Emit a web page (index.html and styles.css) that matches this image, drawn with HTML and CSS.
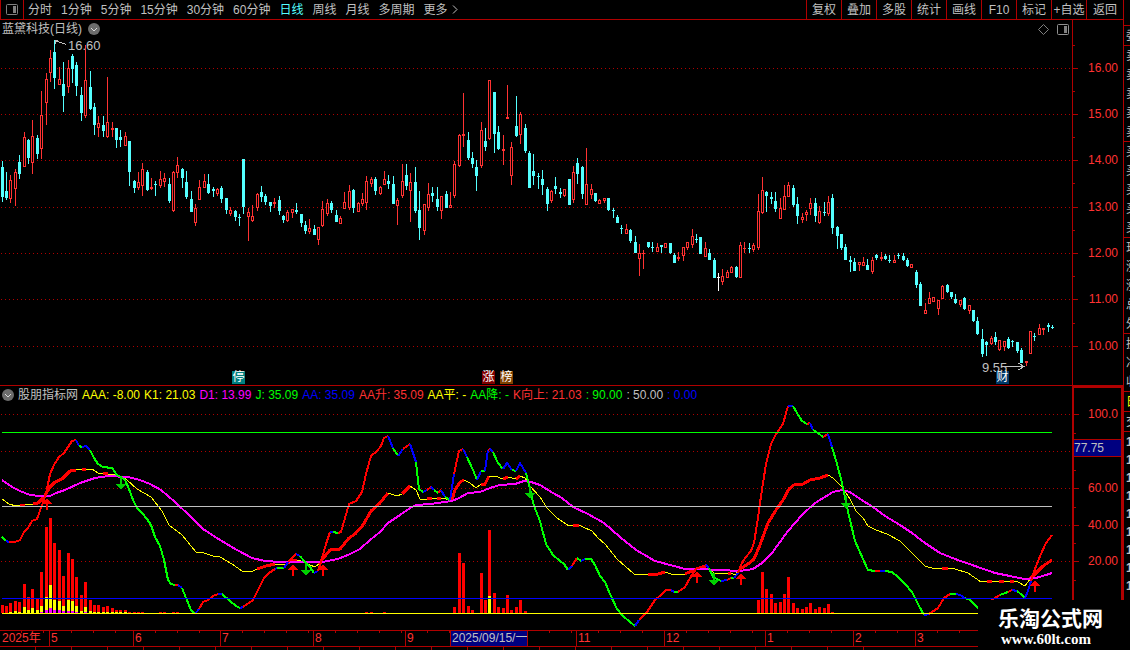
FILE: index.html
```html
<!DOCTYPE html>
<html lang="zh-CN">
<head>
  <meta charset="UTF-8">
  <meta name="viewport" content="width=device-width, initial-scale=1.0">
  <title>蓝黛科技(日线)</title>
  <link rel="stylesheet" href="styles.css">
</head>
<body>
  <div class="main">
    <header class="toolbar">
      <button class="layout-btn" aria-label="布局">
        <svg width="12" height="11" viewBox="0 0 12 11"><rect x="0.5" y="0.5" width="11" height="10" rx="1" fill="none" stroke="#808080"/><rect x="7" y="2" width="3" height="7" fill="#808080"/></svg>
      </button>
      <nav class="periods">
        <a href="#">分时</a>
        <a href="#">1分钟</a>
        <a href="#">5分钟</a>
        <a href="#">15分钟</a>
        <a href="#">30分钟</a>
        <a href="#">60分钟</a>
        <a href="#" class="active">日线</a>
        <a href="#">周线</a>
        <a href="#">月线</a>
        <a href="#">多周期</a>
        <a href="#" class="more">更多<svg width="6" height="9" viewBox="0 0 6 9"><path d="M1 0.5L5 4.5L1 8.5" fill="none" stroke="#c0c0c0"/></svg></a>
      </nav>
      <div class="tools">
        <button>复权</button>
        <button>叠加</button>
        <button>多股</button>
        <button>统计</button>
        <button>画线</button>
        <button>F10</button>
        <button>标记</button>
        <button>+自选</button>
        <button>返回</button>
      </div>
    </header>

    <section class="pane price">
      <div class="plot">
        <svg class="chart" id="priceChart" viewBox="0 20 1072 365" preserveAspectRatio="none"></svg>
        <div class="pane-head">
          <h1>蓝黛科技(日线)</h1>
          <svg width="12" height="12" viewBox="0 0 12 12"><circle cx="6" cy="6" r="6" fill="#6c6c6c"/><path d="M3 5L6 8L9 5" fill="none" stroke="#d8d8d8"/></svg>
          <div class="pane-icons">
            <svg width="11" height="11" viewBox="0 0 11 11"><path d="M5.5 0.5L10.5 5.5L5.5 10.5L0.5 5.5Z" fill="none" stroke="#808080"/></svg>
            <svg width="12" height="11" viewBox="0 0 12 11"><rect x="0.5" y="0.5" width="11" height="10" rx="1" fill="none" stroke="#909090"/><rect x="7" y="2" width="3" height="7" fill="#808080"/></svg>
          </div>
        </div>
        <span class="note high">16.60</span>
        <span class="note low">9.55</span>
        <span class="event halt">停</span>
        <span class="event rise">涨</span>
        <span class="event rank">榜</span>
        <span class="event report">财</span>
      </div>
      <div class="axis" id="priceAxis"></div>
    </section>

    <section class="pane indicator">
      <div class="plot">
        <svg class="chart" id="kdjChart" viewBox="0 386 1072 244" preserveAspectRatio="none"></svg>
        <div class="pane-head">
          <svg width="12" height="12" viewBox="0 0 12 12"><circle cx="6" cy="6" r="6" fill="#6c6c6c"/><path d="M3 5L6 8L9 5" fill="none" stroke="#d8d8d8"/></svg>
          <h2>股朋指标网</h2>
          <span class="yellow">AAA: -8.00</span>
          <span class="yellow">K1: 21.03</span>
          <span class="magenta">D1: 13.99</span>
          <span class="green">J: 35.09</span>
          <span class="blue">AA: 35.09</span>
          <span class="red">AA升: 35.09</span>
          <span class="yellow">AA平: -</span>
          <span class="green">AA降: -</span>
          <span class="red">K向上: 21.03</span>
          <span class="green">: 90.00</span>
          <span>: 50.00</span>
          <span class="blue">: 0.00</span>
        </div>
      </div>
      <div class="axis framed" id="kdjAxis">
        <span class="cursor-value">77.75</span>
      </div>
    </section>

    <div class="timeline">
      <span>2025年</span>
      <span>5</span>
      <span>6</span>
      <span>7</span>
      <span>8</span>
      <span>9</span>
      <span></span>
      <span class="selected">2025/09/15/一</span>
      <span></span>
      <span>11</span>
      <span>12</span>
      <span>1</span>
      <span>2</span>
      <span>3</span>
    </div>
    <div class="tabs">
      <i></i><i></i><i></i><i></i><i></i><i></i><i></i><i></i><i></i><i></i><i></i><i></i>
      <i></i><i></i><i></i><i></i><i></i><i></i><i></i><i></i><i></i><i></i><i></i><i></i>
    </div>
  </div>

  <aside class="quote">
    <div class="group"></div>
    <div class="group"><span>委</span></div>
    <div class="group"><span>卖</span><span>卖</span><span>卖</span><span>卖</span><span>卖</span></div>
    <div class="group"><span>买</span><span>买</span><span>买</span><span>买</span><span>买</span></div>
    <div class="group"><span>现</span><span>涨</span><span>涨</span><span>总</span><span>外</span></div>
    <div class="group"><span>换</span><span>净</span><span>收</span></div>
    <div class="group yellow"><span>日</span></div>
    <div class="group"><span>交</span></div>
    <div class="group ticks"><span>1</span><span>1</span><span>1</span><span>1</span><span>1</span><span>1</span><span>1</span><span>1</span><span>1</span></div>
  </aside>

  <div class="site-mark">
    <strong>乐淘公式网</strong>
    <a href="#">www.60lt.com</a>
  </div>

  <script src="chart.js"></script>
</body>
</html>
```
FILE: styles.css
```css
* {
  box-sizing: border-box;
}
body {
  margin: 0;
  height: 100vh;
  overflow: hidden;
  display: flex;
  position: relative;
  background: #000;
  color: #c0c0c0;
  font-family: "Liberation Sans", "Noto Sans CJK SC", sans-serif;
  font-size: 12px;
  line-height: 16px;
}
a {
  color: inherit;
  text-decoration: none;
}
button {
  margin: 0;
  padding: 0;
  background: none;
  border: none;
  color: inherit;
  font: inherit;
  cursor: pointer;
}
h1,
h2 {
  margin: 0;
  font-size: 12px;
  font-weight: normal;
}
.main {
  flex: 1;
  min-width: 0;
}

/* toolbar */
.toolbar {
  display: flex;
  height: 20px;
  border-bottom: 1px solid #b00000;
  white-space: nowrap;
}
.layout-btn {
  display: flex;
  align-items: center;
  justify-content: center;
  width: 24px;
  border-left: 1px solid #b00000;
  border-right: 1px solid #b00000;
}
.periods {
  display: flex;
  align-items: center;
  gap: 9px;
  padding-left: 4px;
}
.periods .active {
  color: #54ffff;
}
.more svg {
  margin-left: 4px;
}
.tools {
  display: flex;
  margin-left: auto;
}
.tools button {
  width: 35px;
  border-left: 1px solid #b00000;
}
.tools button:last-child {
  width: 37px;
}

/* chart panes */
.pane {
  display: flex;
  border-bottom: 1px solid #b00000;
}
.plot {
  flex: 1;
  min-width: 0;
  position: relative;
}
.chart {
  display: block;
  width: 100%;
  shape-rendering: crispEdges;
}
.price .chart {
  height: 365px;
}
.indicator .chart {
  height: 244px;
}
.pane-head {
  position: absolute;
  top: 0;
  left: 2px;
  right: 3px;
  display: flex;
  align-items: center;
  gap: 4px;
  height: 18px;
  white-space: nowrap;
}
.price .pane-head {
  gap: 6px;
}
.pane-icons {
  display: flex;
  gap: 8px;
  margin-left: auto;
}
.note {
  position: absolute;
  font-size: 13px;
}
.note.high {
  left: 68px;
  top: 18px;
}
.note.low {
  left: 982px;
  bottom: 9px;
}
.event {
  position: absolute;
  bottom: 1px;
  width: 13px;
  height: 13px;
  color: #fff;
  line-height: 12px;
  text-align: center;
}
.event.halt {
  left: 232px;
  background: #008080;
}
.event.rise {
  left: 482px;
  background: #800000;
}
.event.rank {
  left: 500px;
  background: #804000;
}
.event.report {
  left: 996px;
  background: #003868;
}

/* value axes */
.axis {
  position: relative;
  width: 51px;
  border-left: 1px solid #b00000;
  color: #ff3232;
}
.axis.framed {
  border: 2px solid #b00000;
  border-bottom: none;
}
.axis span {
  position: absolute;
  right: 5px;
  margin-top: -8px;
}
.axis.framed span {
  right: 3px;
}
.axis i {
  position: absolute;
  left: 0;
  width: 5px;
  height: 1px;
  background: #b00000;
}
.axis i.minor {
  width: 2px;
}
.axis .cursor-value {
  top: 59px;
  left: 0;
  background: #000080;
  color: #c0c0c0;
  border-top: 1px solid #b00000;
  border-bottom: 1px solid #b00000;
}
.axis.framed .cursor-value {
  right: 0;
}

/* time axis */
.timeline {
  display: grid;
  grid-template-columns: 49fr 84fr 87fr 93fr 92fr 45fr 0fr 78fr 48fr 88fr 101fr 88fr 62fr 208fr;
  height: 16px;
  border-bottom: 1px solid #b00000;
  color: #ff3232;
  line-height: 15px;
  white-space: nowrap;
}
.timeline span {
  min-width: 0;
  padding-left: 1px;
  border-left: 1px solid #b00000;
  background: repeating-linear-gradient(90deg, transparent 0 21px, #b00000 21px 22px) 0 0 / 100% 2px no-repeat;
}
.timeline span:first-child {
  border-left: none;
  padding-left: 2px;
}
.timeline span:empty {
  border: none;
  padding: 0;
}
.timeline .selected {
  background: #000080;
  color: #c0c0c0;
  border-right: 1px solid #b00000;
}
.tabs {
  display: flex;
  height: 16px;
}
.tabs i {
  width: 36px;
  border-right: 1px solid #b00000;
}

/* quote strip at the right edge */
.quote {
  width: 7px;
  overflow: hidden;
  padding-top: 5px;
  border-left: 1px solid #b00000;
}
.group {
  padding-left: 2px;
  border-bottom: 1px solid #b00000;
}
.group:first-child {
  height: 21px;
}
.group span {
  display: block;
  height: 19px;
  line-height: 20px;
}
.group.ticks {
  border: none;
  font-weight: bold;
}
.ticks span {
  height: 18px;
}
.yellow {
  color: #ffff00;
}
.magenta {
  color: #ff00ff;
}
.green {
  color: #00ff00;
}
.blue {
  color: #0000ff;
}
.red {
  color: #ff3232;
}

.site-mark {
  position: absolute;
  right: 0;
  bottom: 0;
  width: 152px;
  height: 50px;
  padding: 6px 0 0 20px;
  background: #000;
  color: #fff;
}
.site-mark strong {
  display: block;
  font-size: 21px;
  line-height: 25px;
}
.site-mark a {
  display: block;
  padding-left: 3px;
  font: bold 15px/16px "Liberation Serif", serif;
}
```
FILE: chart.js
```js
// d = down, u = up, w = flat; high, body top, body bottom, low
const candles = `
d161,167,197,202 d172,191,198,200 u175,180,199,203 u169,172,189,206 d155,162,174,179 u132,137,167,167
d139,140,158,164 u120,136,163,174 d135,138,154,159 u91,115,149,159 u73,79,103,125 u50,58,73,82
d40,52,78,89 u67,79,85,85 d62,84,96,112 u60,68,87,93 d54,56,69,83 d62,65,86,96
d87,95,113,121 u45,80,116,118 d71,87,109,110 d103,107,125,135 u116,123,128,137 d116,125,131,137
u77,122,137,138 u122,128,130,137 d128,128,140,148 d130,137,140,147 u132,136,146,146 d141,141,172,186
d180,181,188,193 u172,182,188,190 u163,169,186,196 d170,172,190,191 u178,187,189,190 d181,184,185,196
u171,179,186,188 u173,178,182,187 d178,184,201,203 u171,172,211,212 u157,165,173,178 d168,169,178,188
d171,182,197,199 d191,199,212,212 u204,208,223,226 u180,187,200,200 u174,181,188,188 d174,184,193,194
d187,189,191,197 u188,189,194,196 d186,188,199,203 d198,198,210,214 u207,210,214,216 d210,211,217,221
d214,217,218,226 d159,159,207,214 u208,212,217,241 u205,216,221,222 u193,194,208,211 d186,192,197,202
d194,196,202,205 d202,202,206,212 u198,202,204,208 d196,200,211,215 d215,216,220,223 u210,212,221,222
u209,209,213,218 d203,210,212,214 d214,214,223,227 d221,225,231,234 u219,228,232,234 d225,229,235,235
u227,227,240,245 u201,209,226,227 u199,203,214,216 d201,203,210,213 d210,215,222,222 u216,218,224,224
u192,202,209,209 u185,191,208,210 d189,190,208,213 u202,203,212,212 u193,199,204,206 u176,181,203,210
u177,179,184,187 d177,179,191,195 u186,187,194,195 u171,179,185,185 d175,181,184,189 d176,184,204,204
u198,200,206,225 u164,181,196,198 d164,175,186,190 u173,182,191,222 d167,182,211,213 d191,210,228,240
u204,204,231,235 u183,194,208,211 d187,193,196,202 d187,199,207,211 u196,196,211,219 d191,194,208,208
u192,205,208,208 u161,164,196,198 u134,135,166,167 u93,134,136,147 d132,140,158,160 d152,158,164,168
d160,167,176,191 u122,130,166,168 d128,141,147,151 u80,80,139,140 d92,92,134,153 d126,132,149,150
u135,149,151,165 u85,117,119,119 u142,147,176,185 d96,126,136,137 u112,114,135,144 d124,128,151,153
d151,153,188,188 d154,171,176,185 d173,176,177,189 d170,179,185,195 d187,189,204,211 u190,191,201,203
d177,186,189,194 d188,192,194,198 u189,189,196,197 d179,179,205,205 u166,172,200,203 d158,163,174,184
d166,167,194,199 u148,184,205,205 u184,189,195,199 d193,193,201,202 u199,200,204,204 u198,198,201,203
d198,198,210,211 d208,210,211,218 d215,217,223,223 d225,228,229,234 u224,229,234,234 d229,230,241,243
d236,242,253,253 u244,253,259,276 u250,253,254,269 d242,242,247,248 d242,247,248,252 u243,247,252,252
d245,245,247,253 u243,243,248,248 d243,243,253,254 d253,255,263,263 u252,257,259,261 u247,247,256,261
u242,242,248,250 u229,236,245,248 d234,239,240,243 d237,237,254,254 u242,248,257,257 d249,253,260,260
d258,260,278,278 w273,277,278,291 u269,276,282,285 u270,272,278,278 u266,267,273,273 d266,267,277,278
u242,245,278,278 u242,248,249,253 d243,248,249,253 u243,245,250,252 u194,211,248,250 u177,190,213,214
d191,192,196,212 d192,197,199,204 d192,201,209,212 u198,208,219,219 u185,196,210,210 u182,185,197,197
d185,188,205,207 d197,204,216,224 u213,217,220,223 u210,212,215,221 u198,203,209,215 d198,203,216,222
u206,211,223,224 d202,212,213,216 u196,202,214,216 d194,198,228,234 d226,227,236,249 d234,234,248,250
d244,247,260,260 d256,260,262,272 d258,262,271,271 u262,262,265,271 u257,262,266,266 d259,265,270,270
u257,260,272,274 d254,255,258,260 u252,257,259,261 d254,256,259,260 d255,260,261,263 u255,260,263,263
d253,255,256,259 d253,256,260,261 d258,260,266,267 u264,264,268,268 d270,272,285,288 d282,284,306,306
u303,310,314,314 u292,298,304,304 u297,297,302,302 u300,300,309,315 u285,286,299,299 d284,285,292,293
d292,292,297,299 d294,299,303,304 u300,300,305,307 d297,298,309,310 u305,305,311,314 d310,310,321,322
d317,321,334,335 d329,339,354,357 d341,342,345,356 u336,338,344,345 d332,337,342,345 u340,340,350,351
u341,341,347,351 d337,339,348,349 d340,341,342,347 d342,342,351,353 d348,350,363,363 u361,361,363,366
u331,331,354,354 d333,336,337,341 u324,328,335,335 u328,328,330,335 d323,325,327,332 d325,327,328,329`;

// index: top of the red, yellow and magenta part of the bar
const bars = {
  0: [605], 1: [606], 2: [603, 612], 3: [601, 611], 4: [602, 612], 5: [584, 607], 6: [597, 610], 7: [589, 608],
  8: [599, 610], 9: [572, 606, 612], 10: [527, 597, 610], 11: [518, 585, 608], 12: [543, 600, 610],
  13: [550, 601, 610], 14: [576, 606, 611], 15: [553, 600, 611], 16: [559, 601, 611], 17: [577, 606, 612],
  18: [595, 611], 19: [582, 607, 612], 20: [600, 611], 21: [605, 612], 22: [605, 612], 23: [607, 612],
  24: [606, 612], 25: [608, 612], 26: [610, 612], 27: [610, 612], 28: [610, 612], 29: [612], 30: [612],
  31: [612], 32: [612], 36: [612], 37: [612], 39: [612], 40: [612], 83: [612], 84: [612], 87: [612],
  103: [607], 104: [553], 105: [563], 106: [606], 107: [610], 109: [573], 110: [600], 111: [530, 596],
  112: [593], 113: [607], 114: [608], 115: [595], 116: [610], 117: [607], 118: [600], 119: [611],
  172: [600], 173: [572], 174: [589], 175: [594], 176: [603], 177: [602], 178: [594], 179: [577],
  180: [603], 181: [608], 182: [609], 183: [607], 184: [603], 185: [609], 186: [607], 187: [608],
  188: [604], 189: [612]
};

const dLine = `m 2,480 12,487 20,491 30,495 40,496 50,496 56,493 65,490 80,483 95,478 108,476 128,477 140,480
150,484 161,490 175,502 190,516 203,529 220,540 237,550 252,558 265,561 280,562 322,562 338,559 350,554 360,549
370,540 380,532 388,523 400,515 410,508 416,505 430,504 452,501 459,498 468,493 480,492 490,488 500,485 515,484
524,481 531,482 540,485 553,493 562,498 573,507 588,514 604,523 620,537 636,550 655,561 670,565 685,569 700,569
720,570 740,571 753,569 762,563 772,553 788,531 802,515 815,503 833,492 842,490 850,492 860,499 873,507 885,516
900,525 912,533 925,543 940,553 955,559 975,566 995,573 1010,576 1024,579 1036,578 1046,575 1052,573`;

const kLine = `y 2,499 9,504 16,506 20,505 | r 25,505 | y 30,504 33,504 | r 38,503 44,497 50,487 55,482 62,479 70,471
76,470 | y 82,469 | r 86,469 | y 92,469 98,473 103,473 | r 108,474 | y 115,475 121,477 126,479 137,489 151,497
162,511 169,525 182,535 196,552 204,553 213,556 220,557 232,564 242,571 253,571 257,569 | r 266,566 275,564 |
y 286,564 288,563 | r 292,560 297,560 | y 304,562 310,565 315,567 319,564 | r 325,556 330,550 340,549 349,538 355,534
363,525 371,511 380,503 388,493 | y 397,496 402,494 | r 410,486 | y 416,490 420,499 424,500 427,499 | r 432,498 |
y 437,499 | r 441,498 | y 452,500 | r 455,490 460,482 464,480 | y 470,483 476,488 481,484 | r 485,484 489,476 |
y 495,476 503,479 | r 508,477 | y 516,479 | r 520,476 | y 525,478 530,486 540,497 547,508 557,518 569,526 573,525 |
r 579,525 | y 583,527 592,531 598,538 605,544 617,559 634,574 648,574 | r 658,574 665,572 | y 671,574 679,575 685,574 |
r 696,569 706,566 | y 709,568 714,573 728,573 | r 731,573 | y 735,575 740,569 | r 748,564 754,559 760,545 768,523
776,510 783,500 789,489 794,485 803,484 810,480 820,478 828,475 | y 833,478 842,487 850,499 856,511 863,518 868,526
876,530 887,534 900,541 910,551 925,566 935,569 942,568 | r 948,568 | y 955,569 968,573 981,582 987,581 | r 992,581 |
y 999,581 | r 1004,581 | y 1010,581 | r 1014,581 | y 1018,582 1025,586 1030,579 | r 1036,573 1043,566 1052,560`;

const jLine = `g 2,537 6,541 | b 9,542 | r 15,542 20,540 24,532 28,528 32,521 37,519 41,508 46,494 50,474 54,465
59,457 64,453 68,447 72,441 76,440 | b 79,446 | g 82,447 | b 86,446 90,450 | g 94,458 98,464 103,467 112,468
117,475 121,477 125,480 129,489 133,500 137,508 142,513 147,519 151,525 155,537 160,546 164,560 168,580 171,584
175,585 | r 178,585 | b 182,588 | g 186,598 191,610 195,614 | b 199,609 | r 203,602 208,600 213,596 218,594 |
b 222,594 | g 230,601 236,606 240,608 | b 243,607 | r 253,600 260,586 264,578 269,573 275,569 | b 277,568 |
g 284,568 | b 288,562 | r 292,558 296,554 | b 300,556 | g 304,561 310,567 314,573 | b 318,571 | r 321,562 326,544
330,532 | b 333,532 | g 338,533 | r 341,532 345,518 349,504 356,501 362,492 366,474 371,456 377,451 381,446
384,438 388,436 | b 393,448 | g 398,456 | b 403,449 | r 410,444 | b 416,462 | g 419,489 423,492 | b 427,490 |
r 431,487 | b 434,490 | g 438,493 | r 441,490 | b 445,497 | g 450,500 | b 454,474 | r 459,451 463,449 | b 467,457 |
g 473,470 477,480 | b 481,471 | g 485,471 | b 488,450 | r 490,449 | b 493,452 | g 498,463 503,469 | b 507,463
512,470 | g 516,471 | b 520,463 526,473 | g 530,489 534,506 540,521 546,544 553,555 560,561 564,564 568,570 |
b 572,566 | r 577,558 | g 581,561 | b 585,559 | g 591,559 595,565 600,576 605,582 610,594 617,609 623,616 630,622
635,626 | b 639,620 | r 647,612 655,600 662,594 666,590 671,590 | b 674,592 | g 678,592 | r 685,587 690,578
696,569 706,565 | b 709,568 | g 713,577 717,579 721,581 | b 727,580 | r 731,578 | g 734,578 | b 738,573 |
r 741,565 745,558 751,551 754,543 758,518 761,496 766,464 771,444 776,434 783,424 788,406 | b 793,406 |
g 797,413 802,421 807,424 | r 810,423 | b 813,430 | g 818,433 823,437 | r 828,434 | b 832,447 | g 837,464
841,479 845,497 849,516 855,541 863,559 868,570 875,571 | r 880,571 | b 885,571 | g 892,572 898,577 905,584
912,592 918,604 924,615 | b 929,614 | r 938,608 944,598 950,594 | g 956,594 | b 960,595 965,598 | g 970,600
978,608 986,607 | r 993,599 1000,595 | g 1008,592 | r 1012,590 | b 1017,591 | g 1022,595 1025,598 |
b 1028,591 1031,581 | r 1036,566 1041,554 1046,543 1052,535`;

const colors = { r: "#ff0000", g: "#00ff00", b: "#0000ff", y: "#ffff00", m: "#ff00ff" };
const price = document.getElementById("priceChart");
const kdj = document.getElementById("kdjChart");

function add(svg, tag, attrs) {
  const el = document.createElementNS("http://www.w3.org/2000/svg", tag);
  for (const key in attrs) {
    el.setAttribute(key, attrs[key]);
  }
  svg.appendChild(el);
}

function rect(svg, x, y, width, height, fill) {
  add(svg, "rect", { x, y, width, height, fill });
}

function barX(i) {
  return Math.floor(2.15 + 4.395 * i);
}

function grid(svg, rows) {
  rows.forEach(y => {
    add(svg, "path", { d: `M1 ${y + 0.5}H1072`, stroke: "#b00000", "stroke-dasharray": "1 3" });
  });
}

function drawLine(text, width, redWidth) {
  let last = "";
  text.split("|").forEach(part => {
    const points = part.trim().split(/\s+/);
    const key = points.shift();
    add(kdj, "polyline", {
      points: last + " " + points.join(" "),
      fill: "none",
      stroke: colors[key],
      "stroke-width": key === "r" ? redWidth : width
    });
    last = points[points.length - 1];
  });
}

function axis(id, top, labels, minors) {
  const box = document.getElementById(id);
  labels.forEach(([y, text]) => {
    box.insertAdjacentHTML("beforeend", `<i style="top:${y - top}px"></i><span style="top:${y - top}px">${text}</span>`);
  });
  minors.forEach(y => {
    box.insertAdjacentHTML("beforeend", `<i class="minor" style="top:${y - top}px"></i>`);
  });
}

// price pane
grid(price, [68, 114, 160, 207, 253, 299, 346]);
candles.trim().split(/\s+/).forEach((item, i) => {
  const [high, top, bottom, low] = item.slice(1).split(",").map(Number);
  const x = barX(i);
  const color = { u: "#ff3232", d: "#54ffff", w: "#ffffff" }[item[0]];
  rect(price, x, high, 1, low - high, color);
  rect(price, x - 1, top, 3, bottom - top, color);
  if (item[0] === "u" && bottom - top > 2) {
    rect(price, x, top + 1, 1, bottom - top - 2, "#000");
  }
});
add(price, "path", { d: "M66 44.5L55 40.5M55 44V40.5H58", fill: "none", stroke: "#c0c0c0" });
add(price, "path", { d: "M1001 366.5H1024M1018 363L1024 366.5L1018 370", fill: "none", stroke: "#c0c0c0" });

// indicator pane
grid(kdj, [414, 451, 488, 525, 561]);
for (const i in bars) {
  bars[i].forEach((y, n) => {
    rect(kdj, barX(i) - 1, y, 3, 613 - y, ["#ff0000", "#ffff00", "#ff00ff"][n]);
  });
}
drawLine(kLine, 1, 3);
drawLine(dLine, 2, 2);
drawLine(jLine, 2, 2);
rect(kdj, 2, 432, 1050, 1, "#00ff00");
rect(kdj, 2, 506, 1050, 1, "#c0c0c0");
rect(kdj, 2, 598, 1050, 1, "#0000ff");
rect(kdj, 2, 613, 1050, 1, "#ffff00");
[[47, 498], [293, 564], [323, 564], [697, 571], [741, 573], [1035, 580]].forEach(([x, y]) => {
  add(kdj, "path", { d: `M${x} ${y}l5 6h-4v6h-2v-6h-4z`, fill: "#ff0000" });
});
[[121, 490], [306, 576], [530, 499], [714, 586], [846, 509]].forEach(([x, y]) => {
  add(kdj, "path", { d: `M${x} ${y}l5 -6h-4v-7h-2v7h-4z`, fill: "#00d000" });
});

axis("priceAxis", 20, [[68, "16.00"], [114, "15.00"], [160, "14.00"], [207, "13.00"], [253, "12.00"], [299, "11.00"], [346, "10.00"]],
  [45, 91, 137, 183, 230, 276, 323]);
axis("kdjAxis", 388, [[414, "100.0"], [488, "60.00"], [525, "40.00"], [561, "20.00"]], [433, 470, 507, 543, 580]);
```
